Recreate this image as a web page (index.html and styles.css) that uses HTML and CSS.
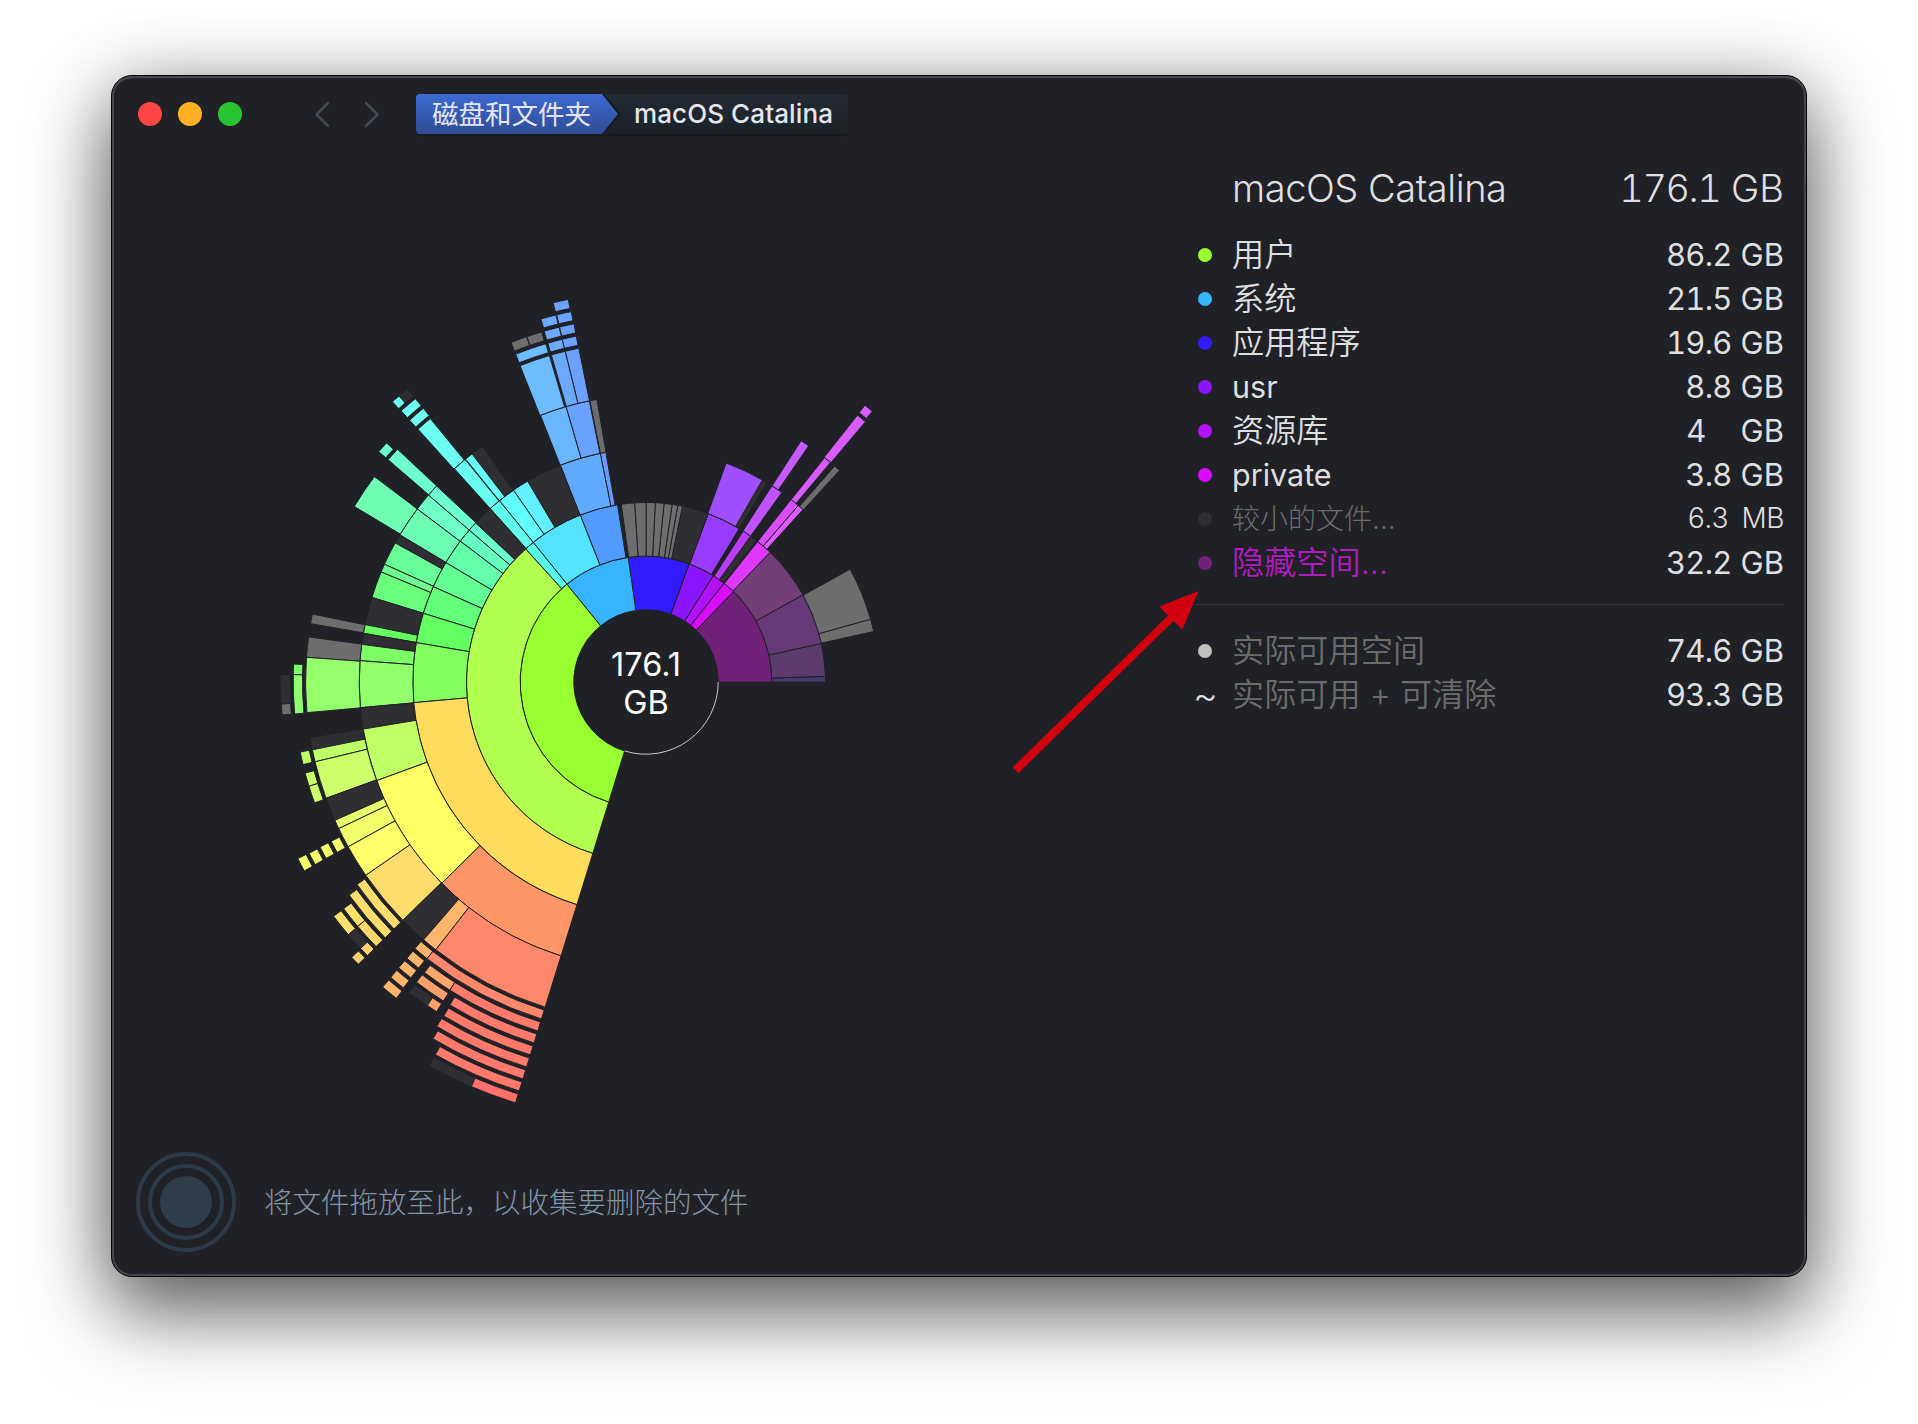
FILE: index.html
```html
<!DOCTYPE html>
<html lang="zh-CN">
<head>
<meta charset="utf-8">
<title>macOS Catalina</title>
<link rel="stylesheet" href="styles.css">
</head>
<body>
<main class="window">
  <header class="toolbar">
    <div class="lights"><i class="light red"></i><i class="light amber"></i><i class="light green"></i></div>
    <nav class="history">
      <svg width="16" height="27" viewBox="0 0 16 27"><path d="M14 2 2.500 13.500 14 25"/></svg>
      <svg width="16" height="27" viewBox="0 0 16 27"><path d="M2 2 13.500 13.500 2 25"/></svg>
    </nav>
    <nav class="crumbs">
      <span class="crumb-root"><span class="crumb-text">磁盘和文件夹</span></span>
      <span class="crumb-leaf">macOS Catalina</span>
    </nav>
  </header>
  <div class="content">
    <section class="chart">
      <svg id="sunburst" width="780" height="940" viewBox="240 180 780 940"></svg>
      <div class="total">176.1<br>GB</div>
    </section>
    <aside class="sidebar">
      <h1 class="title"><span class="title-name">macOS Catalina</span><span class="title-size"><span class="title-num">176.1</span> GB</span></h1>
      <ul class="list">
        <li class="row"><i class="dot c-users"></i><span class="name">用户</span><span class="num">86.2</span><span class="unit">GB</span></li>
        <li class="row"><i class="dot c-system"></i><span class="name">系统</span><span class="num">21.5</span><span class="unit">GB</span></li>
        <li class="row"><i class="dot c-apps"></i><span class="name">应用程序</span><span class="num">19.6</span><span class="unit">GB</span></li>
        <li class="row"><i class="dot c-usr"></i><span class="name latin">usr</span><span class="num">8.8</span><span class="unit">GB</span></li>
        <li class="row"><i class="dot c-library"></i><span class="name">资源库</span><span class="num whole">4</span><span class="unit">GB</span></li>
        <li class="row"><i class="dot c-private"></i><span class="name latin">private</span><span class="num">3.8</span><span class="unit">GB</span></li>
        <li class="row small"><i class="dot c-small"></i><span class="name">较小的文件...</span><span class="num">6.3</span><span class="unit">MB</span></li>
        <li class="row hidden-space"><i class="dot c-hidden"></i><span class="name">隐藏空间...</span><span class="num">32.2</span><span class="unit">GB</span></li>
      </ul>
      <ul class="list free">
        <li class="row muted"><i class="dot c-free"></i><span class="name">实际可用空间</span><span class="num">74.6</span><span class="unit">GB</span></li>
        <li class="row muted"><span class="tilde">~</span><span class="name">实际可用 + 可清除</span><span class="num">93.3</span><span class="unit">GB</span></li>
      </ul>
    </aside>
  </div>
  <footer class="dropzone">
    <svg width="100" height="100" viewBox="0 0 100 100"><circle class="ring" cx="50" cy="50" r="48"/><circle class="ring" cx="50" cy="50" r="36"/><circle class="core" cx="50" cy="50" r="26"/></svg>
    <span class="hint">将文件拖放至此，以收集要删除的文件</span>
  </footer>
</main>
<svg class="arrow" width="200" height="200" viewBox="1010 580 200 200"><path d="M1198.500 591 1159.500 606.500 1168 615.500 1012.500 767.500 1018.500 773 1173.500 621 1182.500 629.500Z"/></svg>
<script src="chart.js"></script>
</body>
</html>
```
FILE: styles.css
```css
* { box-sizing: border-box; }
body {
  margin: 0;
  width: 1918px;
  height: 1424px;
  padding: 75px 111px 147px 111px;
  background: #fff;
  overflow: hidden;
  font-family: Inter, "Noto Sans CJK SC", sans-serif;
  color: #dfdfdf;
}
.window {
  width: 1696px;
  height: 1202px;
  display: flex;
  flex-direction: column;
  background: #202126;
  border: 1px solid #050506;
  border-radius: 21px;
  box-shadow: inset 0 0 0 2px #47474b, inset 0 2px 1px #727376, 0 38px 80px rgba(0,0,0,.52), 0 8px 72px rgba(0,0,0,.3);
}
.toolbar {
  height: 76px;
  flex: none;
  display: flex;
  align-items: center;
  padding-left: 26px;
}
.lights { display: flex; gap: 16px; width: 176px; }
.light { width: 24px; height: 24px; border-radius: 50%; }
.red { background: #ff4645; }
.amber { background: #ffb024; }
.green { background: #29c231; }
.history { display: flex; gap: 34px; width: 102px; }
.history path { fill: none; stroke: #43474f; stroke-width: 2.600; stroke-linecap: round; stroke-linejoin: round; }
.crumbs {
  display: flex;
  height: 40px;
  width: 432px;
  border-radius: 4px;
  background: linear-gradient(#232a33, #1b2129);
  box-shadow: 0 2px 1px #17191d;
  font-size: 26px;
  line-height: 40px;
  font-weight: 450;
  color: #e4e6ee;
}
.crumb-root {
  width: 205px;
  background: #15181d;
  border-radius: 4px;
  clip-path: polygon(0 0, 188px 0, 205px 20px, 188px 40px, 0 40px);
}
.crumb-text {
  display: block;
  width: 202px;
  height: 40px;
  padding-left: 16px;
  font-size: 26.500px;
  font-weight: 400;
  background: linear-gradient(#3d69d2, #2f4c94);
  border-radius: 4px;
  clip-path: polygon(0 0, 186px 0, 202px 20px, 186px 40px, 0 40px);
}
.crumb-leaf { padding-left: 13px; font-size: 26px; letter-spacing: .1px; white-space: nowrap; }
.content { flex: 1; display: flex; min-height: 0; }
.chart { position: relative; width: 1084px; padding: 28px 0 0 128px; }
.total {
  position: absolute;
  left: 464px;
  top: 494px;
  width: 140px;
  text-align: center;
  font-size: 32.500px;
  line-height: 38px;
  color: #fff;
}
.sidebar { width: 588px; padding-top: 8px; }
.title { display: flex; justify-content: space-between; margin: 0; padding-left: 36px; height: 56px; line-height: 56px; font-weight: 300; font-size: 38px; }
.title-name { letter-spacing: -.45px; }
.title-num { font-variant-numeric: tabular-nums; letter-spacing: -1.500px; }
.list { list-style: none; margin: 0; padding: 17px 0 19px; }
.list.free { border-top: 1px solid #36373b; padding-top: 24px; }
.row { display: flex; align-items: center; height: 44px; font-size: 31px; }
.dot { width: 14px; height: 14px; border-radius: 50%; margin: 0 20px 0 2px; flex: none; }
.tilde { width: 39px; margin-left: -3px; flex: none; font-size: 38px; line-height: 44px; font-weight: 300; }
.name { flex: 1; font-weight: 350; font-size: 32.200px; line-height: 44px; white-space: nowrap; }
.name.latin { font-size: 30.500px; font-weight: 400; }
.num { text-align: right; font-variant-numeric: tabular-nums; letter-spacing: -.8px; }
.num, .unit { padding-bottom: 2px; }
.whole { margin-right: 26px; }
.unit { width: 52.500px; text-align: right; }
.small .name, .small .num, .small .unit { font-size: 28px; font-weight: 300; }
.small .num { margin-right: 3px; }
.small .unit { padding-left: 0; letter-spacing: -.5px; }
.small .name, .muted .name { color: #6c6c6c; }
.hidden-space .name { color: #b01cc0; }
.c-users { background: #98ff30; }
.c-system { background: #37b4ff; }
.c-apps { background: #311cff; }
.c-usr { background: #8a14ff; }
.c-library { background: #b411ff; }
.c-private { background: #da0bff; }
.c-small { background: #2f2e32; }
.c-hidden { background: #71217a; }
.c-free { background: #bfbfbf; }
.dropzone { flex: none; display: flex; align-items: center; gap: 28px; height: 148px; padding-left: 24px; }
.ring { fill: none; stroke: #2b3a48; stroke-width: 4; }
.core { fill: #2e3d4a; }
.hint { padding-bottom: 4px; font-size: 28.500px; font-weight: 300; color: #8295a9; }
.arrow { position: absolute; left: 1010px; top: 580px; fill: #d2000f; }
```
FILE: chart.js
```js
// Sunburst: every block holds slices as [ring, x0, y0, x1, y1, colour].
// The two points lie on the bounding rays, in 1/3 px units from the block origin.
var CX = 646, CY = 682;
var DARK = '#2f2e32', GREY = '#6d6d6d';
var blocks = [
  { ox: 480, oy: 280, slices: [
    [1, 874,1206, 760,935, '#71217a'], [1, 760,935, 730,912, '#da0bff'], [1, 730,912, 698,890, '#b411ff'],
    [1, 698,890, 627,853, '#8a14ff'], [1, 627,853, 445,834, '#311cff'], [1, 445,834, 260,912, '#37b4ff'],
    [1, 260,912, 107,2467, '#98ff30'],
    [2, 1034,1206, 1034,1189, '#493a6e'], [2, 1034,1189, 1021,1091, '#5c3c6f'], [2, 1021,1091, 968,945, '#673a77'],
    [2, 968,945, 867,820, '#733d78'], [2, 867,820, 832,786, '#de38fc'], [2, 829,783, 812,768, DARK],
    [2, 812,768, 789,754, '#bc3bff'], [2, 777,747, 684,703, '#983cff'], [2, 684,703, 607,681, DARK],
    [2, 607,681, 593,680, GREY], [2, 593,679, 576,677, GREY], [2, 576,677, 552,674, GREY], [2, 552,673, 526,671, GREY],
    [2, 526,671, 498,670, GREY], [2, 498,670, 464,671, GREY], [2, 464,671, 424,675, GREY],
    [2, 413,677, 301,706, '#519bff'], [2, 301,706, 161,789, '#53e3ff'], [2, 161,789, 138,808, '#58ffe9'],
    [2, 138,808, 107,2467, '#b1ff4e'],
    [3, 1179,1055, 1170,1018, GREY], [3, 1170,1018, 1108,869, GREY],
    [3, 968,690, 955,676, '#dd5bff'], [3, 955,676, 932,660, '#d84eff'], [3, 906,637, 874,620, '#c052ff'],
    [3, 861,609, 846,602, DARK], [3, 846,602, 738,551, '#a04fff'],
    [3, 378,520, 361,521, '#6a99ff'], [3, 361,521, 241,556, '#60aaff'], [3, 241,556, 145,607, DARK],
    [3, 145,607, 102,633, '#62efff'], [3, 102,633, 60,664, '#62ffff'], [3, 60,664, 30,686, '#60ffeb'],
    [4, 1077,573, 1063,559, GREY], [4, 1051,548, 1033,534, '#d95aff'], [4, 986,498, 962,484, '#c45aff'],
    [4, 351,360, 330,363, GREY], [4, 328,363, 258,380, '#6aa2ff'], [4, 258,380, 181,405, '#69b6ff'],
    [5, 1155,427, 1132,406, '#d95cff'], [5, 297,207, 256,216, '#6ba1ff'], [5, 256,216, 215,228, '#6caaff'],
    [5, 209,229, 121,259, '#6dbcff'],
    [6, 1177,394, 1154,377, '#d95cff'],
    [6, 289,170, 247,180, '#6ba1ff'], [6, 247,180, 204,191, '#6caaff'], [6, 198,193, 107,223, '#6dbcff'],
    [7, 282,133, 239,143, '#6ba1ff'], [7, 238,144, 193,155, '#6caaff'], [7, 185,156, 141,170, GREY], [7, 140,171, 93,187, GREY],
    [8, 274,96, 230,105, '#6ba1ff'], [8, 228,106, 183,118, '#6caaff'], [9, 265,60, 220,70, '#6ba1ff']
  ]},
  { ox: 270, oy: 370, slices: [
    [3, 660,415, 619,459, DARK], [3, 617,459, 597,480, '#69ffcd'], [3, 597,480, 570,513, '#66ffbf'],
    [3, 570,513, 528,578, '#64ffaa'], [3, 528,578, 490,650, '#62ff93'], [3, 490,650, 460,730, '#62ff7b'],
    [3, 460,730, 440,818, '#64ff60'], [3, 440,818, 431,998, '#82ff5e'],
    [4, 639,231, 608,254, DARK], [4, 608,254, 588,269, '#66fff7'], [4, 586,269, 554,297, '#68fff0'],
    [4, 499,347, 475,375, '#6dffcf'], [4, 475,375, 442,417, '#6effc6'], [4, 442,417, 390,495, '#6cffb4'],
    [4, 390,495, 376,519, DARK], [4, 376,519, 346,584, '#68ff99'], [4, 346,584, 336,607, '#6fff91'],
    [4, 336,607, 308,683, '#69ff7d'], [4, 308,683, 287,764, DARK], [4, 287,764, 280,790, '#65ff5f'],
    [4, 280,790, 275,823, DARK], [4, 275,823, 270,872, '#7bff65'], [4, 270,872, 273,1013, '#92ff6b'],
    [4, 273,1013, 281,1077, DARK],
    [5, 482,147, 446,180, '#6dfff2'], [5, 384,239, 355,270, '#6effce'], [5, 315,321, 254,410, '#71ffb3'],
    [5, 127,732, 122,761, GREY], [5, 116,801, 110,862, GREY], [5, 110,862, 111,1028, '#95ff6c'],
    [6, 461,116, 420,152, '#6dfff2'], [7, 437,87, 395,124, '#6dfff2'], [8, 413,58, 387,78, DARK], [8, 387,78, 369,97, '#6dfff2'],
    [6, 350,219, 326,245, '#6effce'], [6, 72,882, 70,914, '#7ffe6d'], [6, 70,914, 75,1032, '#90ff6d'],
    [7, 33,915, 34,1002, DARK], [7, 34,1002, 37,1035, GREY]
  ]},
  { ox: 270, oy: 700, slices: [
    [3, 431,8, 737,1207, '#ffdc5b'],
    [4, 281,87, 320,242, '#c0ff65'], [4, 320,242, 515,550, '#ffff66'], [4, 515,550, 737,1207, '#ff9668'],
    [5, 123,112, 129,149, DARK], [5, 129,149, 137,185, '#beff69'], [5, 137,185, 168,295, '#ccff6b'],
    [5, 168,295, 197,360, DARK], [5, 197,360, 208,385, '#e6ff6a'], [5, 208,385, 237,439, '#f2ff6b'],
    [5, 237,439, 290,524, '#ffff6b'], [5, 290,524, 400,660, '#ffdd6c'], [5, 400,660, 462,718, DARK],
    [5, 462,718, 499,747, '#ffb56b'], [5, 499,747, 737,1207, '#ff876b'],
    [6, 92,156, 98,194, '#beff69'], [6, 106,219, 119,258, '#c8ff6b'], [6, 119,258, 133,309, '#ccff6b'],
    [6, 185,423, 202,457, '#f4ff6b'], [7, 152,440, 169,475, '#f4ff6b'], [8, 118,459, 137,493, '#f4ff6b'], [9, 85,475, 104,512, '#f4ff6b'],
    [6, 263,552, 372,687, '#ffdd6c'], [7, 239,584, 346,713, '#ffdd6c'], [8, 221,626, 265,678, '#ffe06b'],
    [8, 265,678, 317,741, '#ffd66b'], [9, 192,648, 237,702, '#ffe06b'], [9, 238,703, 273,743, DARK],
    [9, 273,744, 291,768, '#ffcf6b'], [10, 246,771, 265,793, '#ffcf6b'],
    [6, 437,743, 473,774, '#ffb56b'], [6, 473,774, 737,1207, '#ff876b'],
    [7, 412,773, 447,803, '#ffb56b'], [8, 387,802, 422,834, '#ffb56b'], [9, 362,832, 399,865, '#ffb56b'], [10, 338,861, 379,895, '#ffb56b'],
    [7, 464,817, 542,867, '#ffa56b'], [7, 542,867, 737,1207, '#ff7a6b'], [8, 440,846, 522,900, '#ffa06b'],
    [9, 418,877, 473,915, DARK], [9, 473,915, 501,933, '#ffa06b']
  ]},
  { ox: 370, oy: 860, slices: [
    [8, 240,434, 437,727, '#ff7a6b'], [9, 221,468, 437,727, '#ff7a6b'], [10, 201,498, 437,727, '#ff7a6b'],
    [11, 189,536, 437,727, '#ff7a6b'], [12, 197,582, 437,727, '#ff7a6b'],
    [13, 180,615, 305,678, DARK], [13, 305,678, 437,727, '#ff706b']
  ]}
];
function radii(ring) {
  if (ring < 6) return [72.2 + 53.65 * (ring - 1), 72.2 + 53.65 * ring];
  var outer = 352.5 + 12.55 * (ring - 6);
  return [outer - 9, outer + 0.3];
}
function angle(x, y) {
  var a = Math.atan2(CY - y, x - CX);
  return a < -0.01 ? a + Math.PI * 2 : a;
}
function at(r, a) { return (CX + r * Math.cos(a)).toFixed(2) + ' ' + (CY - r * Math.sin(a)).toFixed(2); }
var svg = document.getElementById('sunburst');
var NS = 'http://www.w3.org/2000/svg';
function add(d, stroke, fill) {
  var p = document.createElementNS(NS, 'path');
  p.setAttribute('d', d);
  p.setAttribute('fill', fill);
  p.setAttribute('stroke', stroke);
  p.setAttribute('stroke-width', 1);
  svg.appendChild(p);
}
blocks.forEach(function (b) {
  b.slices.forEach(function (s) {
    var r = radii(s[0]);
    var a0 = angle(b.ox + s[1] / 3, b.oy + s[2] / 3), a1 = angle(b.ox + s[3] / 3, b.oy + s[4] / 3);
    var big = a1 - a0 > Math.PI ? 1 : 0;
    add('M' + at(r[1], a0) + 'A' + r[1] + ' ' + r[1] + ' 0 ' + big + ' 0 ' + at(r[1], a1) +
        'L' + at(r[0], a1) + 'A' + r[0] + ' ' + r[0] + ' 0 ' + big + ' 1 ' + at(r[0], a0) + 'Z', s[0] > 5 && s[5] === DARK ? 'none' : '#202126', s[5]);
  });
});
// outline of the unused part of the inner circle
add('M' + at(72.2, 0) + 'A72.2 72.2 0 0 1 ' + at(72.2, -1.873), '#c8c8c8', 'none');
```
